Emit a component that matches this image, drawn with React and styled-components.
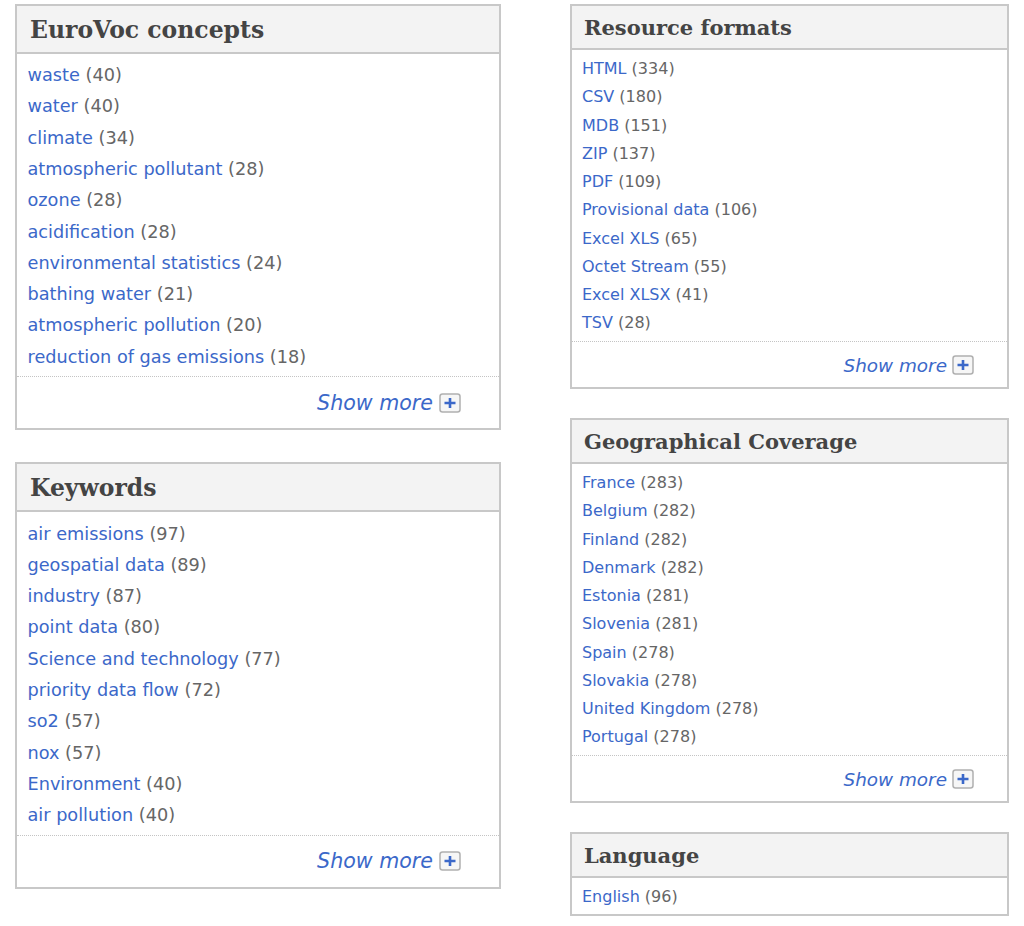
import React from "react";
import styled, { createGlobalStyle, css } from "styled-components";

const GlobalStyle = createGlobalStyle`
	html, body {
		margin: 0;
		padding: 0;
		background: #ffffff;
	}
`;

const Page = styled.div`
	display: flex;
	align-items: flex-start;
	width: 1024px;
	height: 926px;
	overflow: hidden;
	padding: 4px 15px 0;
	box-sizing: border-box;
	justify-content: space-between;
`;

const Column = styled.div`
	display: flex;
	flex-direction: column;
	width: ${(p) => (p.$large ? "486px" : "439px")};
	gap: ${(p) => (p.$large ? "32px" : "29.5px")};
`;

const Panel = styled.section`
	border: 2px solid #c8c8c8;
	box-sizing: border-box;
	background: #ffffff;
`;

const Heading = styled.h2`
	margin: 0;
	background: #f3f3f3;
	border-bottom: 2px solid #c8c8c8;
	color: #444444;
	font-family: "DejaVu Serif", Georgia, serif;
	font-weight: 700;
	${(p) =>
		p.$large
			? css`
					font-size: 23.5px;
					line-height: 42.5px;
					padding: 3px 0 0 13px;
				`
			: css`
					font-size: 21px;
					line-height: 40px;
					padding: 2px 0 0 12px;
				`}
`;

const List = styled.ul`
	list-style: none;
	margin: 0;
	padding: ${(p) => (p.$large ? "6.6px 0 3.4px 10.5px" : "5px 0 3px 10px")};
	font-family: "DejaVu Sans", Verdana, sans-serif;
	font-size: ${(p) => (p.$large ? "17.7px" : "16px")};
	line-height: ${(p) => (p.$large ? "31.3px" : "28.25px")};
	color: #666666;
`;

const ItemLink = styled.a`
	color: #3b68c9;
	text-decoration: none;
`;

const More = styled.div`
	display: flex;
	justify-content: flex-end;
	align-items: center;
	border-top: 1px dotted #c4c4c4;
	font-family: "DejaVu Sans", Verdana, sans-serif;
	font-style: italic;
	color: #3b68c9;
	${(p) =>
		p.$large
			? css`
					gap: 6px;
					height: 51px;
					padding-right: 38px;
					font-size: 20.6px;
				`
			: css`
					gap: 5px;
					height: 43px;
					padding: 2px 33px 0 0;
					font-size: 18.4px;
				`}
`;

const PlusIcon = () => (
	<svg width="22" height="20" viewBox="0 0 22 20" aria-hidden="true">
		<rect x="1" y="1" width="20" height="18" rx="2.5" fill="#f6f6f6" stroke="#b0b0b0" strokeWidth="1.5" />
		<path d="M5.5 10h11M11 5v10" stroke="#3b68c9" strokeWidth="2.6" />
	</svg>
);

const FacetPanel = ({ title, items, large, more = true }) => (
	<Panel>
		<Heading $large={large}>{title}</Heading>
		<List $large={large}>
			{items.map(([name, count]) => (
				<li key={name}>
					<ItemLink href="#">{name}</ItemLink> ({count})
				</li>
			))}
		</List>
		{more && (
			<More $large={large}>
				Show more <PlusIcon />
			</More>
		)}
	</Panel>
);

const eurovoc = [
	["waste", 40],
	["water", 40],
	["climate", 34],
	["atmospheric pollutant", 28],
	["ozone", 28],
	["acidification", 28],
	["environmental statistics", 24],
	["bathing water", 21],
	["atmospheric pollution", 20],
	["reduction of gas emissions", 18],
];

const keywords = [
	["air emissions", 97],
	["geospatial data", 89],
	["industry", 87],
	["point data", 80],
	["Science and technology", 77],
	["priority data flow", 72],
	["so2", 57],
	["nox", 57],
	["Environment", 40],
	["air pollution", 40],
];

const formats = [
	["HTML", 334],
	["CSV", 180],
	["MDB", 151],
	["ZIP", 137],
	["PDF", 109],
	["Provisional data", 106],
	["Excel XLS", 65],
	["Octet Stream", 55],
	["Excel XLSX", 41],
	["TSV", 28],
];

const coverage = [
	["France", 283],
	["Belgium", 282],
	["Finland", 282],
	["Denmark", 282],
	["Estonia", 281],
	["Slovenia", 281],
	["Spain", 278],
	["Slovakia", 278],
	["United Kingdom", 278],
	["Portugal", 278],
];

export default function App() {
	return (
		<Page>
			<GlobalStyle />
			<Column $large>
				<FacetPanel large title="EuroVoc concepts" items={eurovoc} />
				<FacetPanel large title="Keywords" items={keywords} />
			</Column>
			<Column>
				<FacetPanel title="Resource formats" items={formats} />
				<FacetPanel title="Geographical Coverage" items={coverage} />
				<FacetPanel title="Language" items={[["English", 96]]} more={false} />
			</Column>
		</Page>
	);
}
